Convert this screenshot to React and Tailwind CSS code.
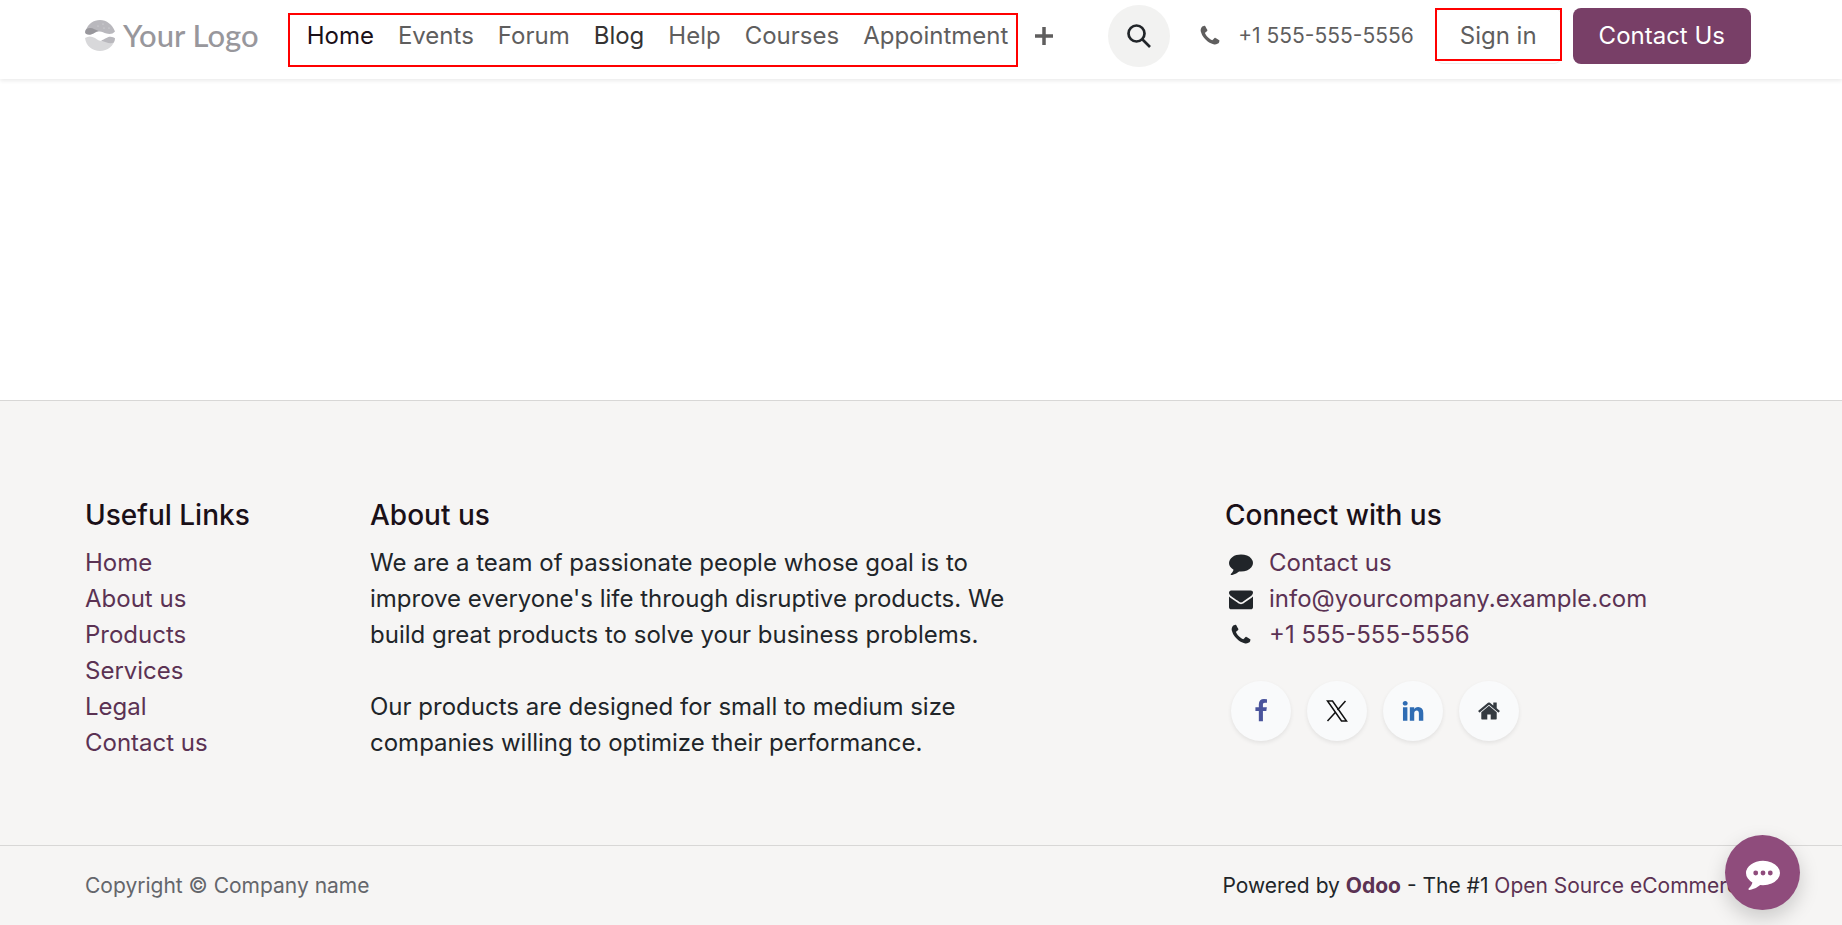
import React from "react";

const PHONE =
  "M1600 1240q0 27-10 70.5t-20.5 68.5q-20.5 49-119.5 103.5-92.5 50-183 50-26.5 0-52-3.5t-57.5-12.5-47.5-14.5-55.5-20.5-49-18q-98-35-175-83-128-79-264.5-215.5t-215.5-264.5q-48-77-83-175-3-9-18-49t-20.5-55.5-14.5-47.5-12.5-57.5-3.5-52q0-90 50-183 55-98 103-119 25-10 68.5-20.5t70.5-10.5q14 0 21 3 18 6 53 76 11 19 30 54t35 63.5 31 53.5q3 4 17.5 25t21.5 35.5 7 28.5q0 20-28.5 50t-62 55-62 53-28.5 46q0 9 5 22.5t8.5 20.5 14 24 11.5 19q76 137 174 235t235 174q2 1 19 11.5t24 14 20.5 8.5 22.5 5q18 0 46-28.5t53-62 55-62 50-28.5q14 0 28.5 7t35.5 21.5 25 17.5q25 15 53.5 31t63.5 35 54 30q70 35 76 53 3 7 3 21z";
const COMMENT =
  "M1792 896q0 174-120 321.5t-326 233-450 85.5q-70 0-145-8-198 175-460 242-49 14-114 22-17 2-30.5-9t-17.5-29v-1q-3-4-.5-12t2-10 4.5-9.5l6-9 7-8.5 8-9q7-8 31-34.5t34.5-38 31-39.5 32.5-51 27-59 26-76q-157-89-247.5-220t-90.5-281q0-130 71-248.5t191-204.5 286-136.5 348-50.5q244 0 450 85.5t326 233 120 321.5z";
const ENVELOPE =
  "M1792 710v794q0 66-47 113t-113 47h-1472q-66 0-113-47t-47-113v-794q44 49 101 87 362 246 497 345 57 42 92.5 65.5t94.5 48 110 24.5h2q51 0 110-24.5t94.5-48 92.5-65.5q170-123 498-345 57-39 100-87zm0-294q0 79-49 151t-122 123q-376 261-468 325-10 7-42.5 31t-54 38-52 32.5-57.5 27-50 9h-2q-23 0-50-9t-57.5-27-52-32.5-54-38-42.5-31q-91-64-262-182.5t-205-142.5q-62-42-117-115.5t-55-136.5q0-78 41.5-130t118.5-52h1472q65 0 112.5 47t47.5 113z";
const HOUSE =
  "M1472 992v480q0 26-19 45t-45 19h-384v-384h-256v384h-384q-26 0-45-19t-19-45v-480q0-1 .5-3t.5-3l575-474 575 474q1 2 1 6zm223-69l-62 74q-8 9-21 11h-3q-13 0-21-7l-692-577-692 577q-12 8-24 7-13-2-21-11l-62-74q-8-10-7-23.5t11-21.5l719-599q32-26 76-26t76 26l244 204v-195q0-14 9-23t23-9h192q14 0 23 9t9 23v408l219 182q10 8 11 21.5t-7 23.5z";
const FACEBOOK =
  "M1343 12v264h-157q-86 0-116 36t-30 108v189h293l-39 296h-254v759h-306v-759h-255v-296h255v-218q0-186 104-288.5t277-102.5q147 0 228 12z";
const LINKEDIN =
  "M477 625v991h-330v-991h330zm21-306q1 73-50.5 122t-135.5 49h-2q-82 0-132-49t-50-122q0-74 51.5-122.5t134.5-48.5 133 48.5 51 122.5zm1166 729v568h-329v-530q0-105-40.5-164.5t-126.5-59.5q-63 0-105.5 34.5t-63.5 85.5q-11 30-11 81v553h-329q2-399 2-647t-1-296l-1-48h329v144h-2q20-32 41-56t56.5-52 87-43.5 114.5-15.5q171 0 275 113.5t104 332.5z";

function Glyph({ d, className }) {
  return (
    <svg viewBox="0 0 1792 1792" fill="currentColor" aria-hidden="true" className={className}>
      <path d={d} />
    </svg>
  );
}

function XGlyph() {
  return (
    <svg viewBox="0 0 22 22" fill="none" stroke="currentColor" aria-hidden="true" className="h-[22px] w-[22px]">
      <path d="M1.5 1h5l14 20h-5z" strokeWidth="1.5" />
      <path d="M19.5 1l-8 9M9.5 12.2L1.5 21" strokeWidth="1.5" />
    </svg>
  );
}

function LogoMark() {
  return (
    <svg viewBox="0 0 30 31" aria-hidden="true" className="h-[31px] w-[30px]">
      <path d="M0.8 10.5C3 4 8.5 0 15 0s12.500 4.500 15 11.500c-2 2.500-5.500 3-8.500 2-3-1-5-2.500-8-2-3 0.500-5 2.500-8.500 3z" fill="#b9b8bd" />
      <path d="M0 12C0.500 9 2 8 5 8c3.500 0 5.500 2 8.500 3-3.500 0.500-5 3.500-9 3.700C2 14.800 0 14 0 12z" fill="#98979c" />
      <path d="M0 18c3-2 6.500-2 10 0 3 1.800 4.500 3.500 8 3 4-0.500 6-3.500 12-2.500C29 26 22.500 31 15 31S1 26 0 18z" fill="#d8d8da" />
      <path d="M16 20.500c4-1 6-3.800 9.500-3.700 2 0.100 3.500 0.700 4.500 1.500-0.200 1.500-0.500 3-1.200 4.200C24.500 24.500 21 22 16 20.500z" fill="#b9b8bd" />
      <g fill="#dddce0">
        <circle cx="13" cy="6" r="0.600" />
        <circle cx="18" cy="4" r="0.600" />
        <circle cx="19" cy="8" r="0.600" />
        <circle cx="24" cy="8" r="0.600" />
      </g>
    </svg>
  );
}

const menu = [
  { label: "Home", color: "text-[#1a1018]" },
  { label: "Events", color: "text-[#5f5e5e]" },
  { label: "Forum", color: "text-[#5f5e5e]" },
  { label: "Blog", color: "text-[#343333]" },
  { label: "Help", color: "text-[#5f5e5e]" },
  { label: "Courses", color: "text-[#5f5e5e]" },
  { label: "Appointment", color: "text-[#5f5e5e]" },
];

const usefulLinks = ["Home", "About us", "Products", "Services", "Legal", "Contact us"];

const contacts = [
  { label: "Contact us", icon: COMMENT },
  { label: "info@yourcompany.example.com", icon: ENVELOPE },
  { label: "+1 555-555-5556", icon: PHONE },
];

const socials = [
  { name: "Facebook", color: "text-[#4a549c]", icon: <Glyph d={FACEBOOK} className="h-6 w-6" /> },
  { name: "X", color: "text-[#111111]", icon: <XGlyph /> },
  { name: "LinkedIn", color: "text-[#2f6cb3]", icon: <Glyph d={LINKEDIN} className="h-6 w-6" /> },
  { name: "Homepage", color: "text-[#343a40]", icon: <Glyph d={HOUSE} className="h-6 w-6" /> },
];

function Header() {
  return (
    <header className="flex h-[79px] items-start bg-white pt-[5px] pr-[91px] pl-[85px] shadow-[0_2px_4px_rgba(0,0,0,0.08)]">
      <div className="flex h-[62px] w-full items-center">
        <a href="#" className="flex items-center gap-2 pb-0.5 font-[Lato,sans-serif] text-[31px] leading-9 font-medium text-[#98979c]">
          <LogoMark />
          Your Logo
        </a>

        <nav className="relative ml-12 flex items-center gap-6">
          {menu.map((item) => (
            <a key={item.label} href="#" className={item.color}>
              {item.label}
            </a>
          ))}
          <span className="pointer-events-none absolute -top-[5px] -right-[10px] -left-[19px] h-[54px] border-2 border-[#ff0000]" />
        </nav>

        <button type="button" aria-label="More" className="ml-[26px] text-[#5f5e5e]">
          <svg viewBox="0 0 20 20" className="h-5 w-5" aria-hidden="true">
            <path d="M10 1v18M1 10h18" stroke="currentColor" strokeWidth="3.500" />
          </svg>
        </button>

        <div className="ml-auto flex items-center">
          <button
            type="button"
            aria-label="Search"
            className="flex h-[62px] w-[62px] items-center justify-center rounded-full bg-[#f2f2f1] text-[#212529]"
          >
            <svg viewBox="0 0 24 24" fill="none" stroke="currentColor" strokeWidth="2.700" className="h-6 w-6" aria-hidden="true">
              <circle cx="9.500" cy="9.500" r="8" />
              <path d="M15.500 15.500L23 23" />
            </svg>
          </button>
          <a href="#" className="ml-7 flex items-center gap-4 text-[21px] text-[#5f5e5e]">
            <Glyph d={PHONE} className="h-6 w-6" />
            +1 555-555-5556
          </a>
          <a
            href="#"
            className="relative ml-[21px] flex h-14 items-center rounded-lg border border-[#eeeeee] px-6 text-[#5f5e5e]"
          >
            Sign in
            <span className="pointer-events-none absolute -inset-x-px -top-px bottom-[2px] border-2 border-[#ff0000]" />
          </a>
          <a href="#" className="ml-[11px] flex h-14 items-center rounded-lg bg-[#783f67] px-[26px] text-white">
            Contact Us
          </a>
        </div>
      </div>
    </header>
  );
}

function ColumnTitle({ children }) {
  return <h5 className="mb-3 text-[28px] leading-9 font-medium text-[#1a1018]">{children}</h5>;
}

function Footer() {
  return (
    <footer className="border-t border-[#d8d7d6] bg-[#f6f5f4]">
      <div className="grid grid-cols-12 gap-x-11 pt-24 pr-[91px] pb-[84px] pl-[85px]">
        <div className="col-span-2">
          <ColumnTitle>Useful Links</ColumnTitle>
          <ul>
            {usefulLinks.map((label) => (
              <li key={label}>
                <a href="#" className="text-[#5b3253]">{label}</a>
              </li>
            ))}
          </ul>
        </div>

        <div className="col-span-5">
          <ColumnTitle>About us</ColumnTitle>
          <p>
            We are a team of passionate people whose goal is to improve everyone's life through disruptive
            products. We build great products to solve your business problems.
            <br />
            <br />
            Our products are designed for small to medium size companies willing to optimize their performance.
          </p>
        </div>

        <div className="col-span-4 col-start-9">
          <ColumnTitle>Connect with us</ColumnTitle>
          <ul>
            {contacts.map((c) => (
              <li key={c.label} className="flex items-center gap-4 pl-1">
                <Glyph d={c.icon} className="h-6 w-6 shrink-0" />
                <a href="#" className="text-[#5b3253]">{c.label}</a>
              </li>
            ))}
          </ul>
          <div className="mt-7 flex gap-4 pl-[6px]">
            {socials.map((s) => (
              <a
                key={s.name}
                href="#"
                aria-label={s.name}
                className={`flex h-[60px] w-[60px] items-center justify-center rounded-full bg-[#f9fafb] shadow-[0_2px_4px_rgba(0,0,0,0.08)] ${s.color}`}
              >
                {s.icon}
              </a>
            ))}
          </div>
        </div>
      </div>

      <div className="flex items-center justify-between border-t border-[#d8d7d6] pt-[22px] pr-[91px] pb-[21px] pl-[85px] text-[21px]">
        <span className="text-[#64666b]">Copyright © Company name</span>
        <span>
          Powered by <a href="#" className="font-bold text-[#5b3253]">Odoo</a> - The #1{" "}
          <a href="#" className="text-[#5b3253]">Open Source eCommerce</a>
        </span>
      </div>
    </footer>
  );
}

export default function App() {
  return (
    <div className="flex min-h-screen flex-col bg-white font-[Inter,sans-serif] text-[24px] leading-9 text-[#212529]">
      <Header />
      <main className="flex-1" />
      <Footer />

      <button
        type="button"
        aria-label="Open live chat"
        className="fixed right-[42px] bottom-[15px] flex h-[75px] w-[75px] items-center justify-center rounded-full bg-[#8f4c7c] text-white shadow-[0_8px_20px_rgba(0,0,0,0.18)]"
      >
        <svg viewBox="0 0 1792 1792" className="h-[34px] w-[34px]" aria-hidden="true">
          <path d={COMMENT} fill="currentColor" />
          <g fill="#8f4c7c">
            <circle cx="512" cy="896" r="128" />
            <circle cx="896" cy="896" r="128" />
            <circle cx="1280" cy="896" r="128" />
          </g>
        </svg>
      </button>
    </div>
  );
}
